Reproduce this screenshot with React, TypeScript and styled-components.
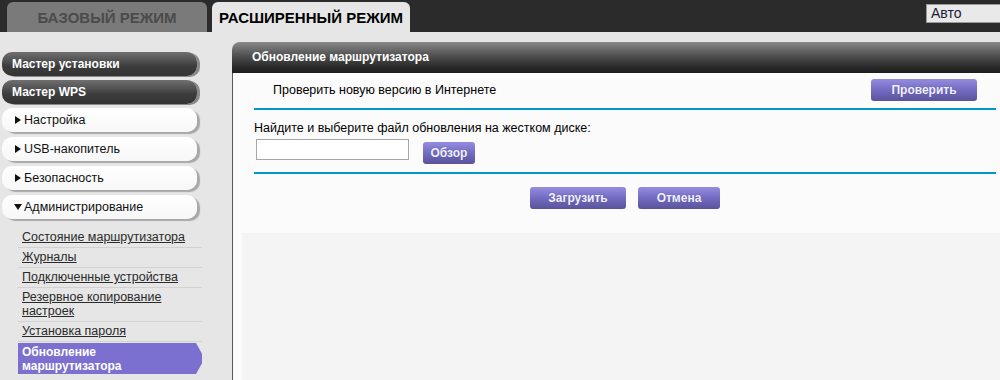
import React from "react";
import styled, { createGlobalStyle } from "styled-components";

const Global = createGlobalStyle`
  html, body { margin: 0; padding: 0; }
  body {
    font-family: "Liberation Sans", Arial, sans-serif;
    background: #e6e6e6;
    overflow: hidden;
  }
`;

const Page = styled.div`
  width: 1000px;
  height: 380px;
  display: flex;
  flex-direction: column;
  overflow: hidden;
`;

const TopBar = styled.div`
  height: 32px;
  background: #2b2b2b;
  display: flex;
  align-items: flex-end;
  padding-left: 7px;
  gap: 5px;
  flex: none;
`;

const Tab = styled.div<{ $active?: boolean }>`
  width: ${(p) => (p.$active ? 198 : 200)}px;
  height: 30px;
  border-radius: 6px 6px 0 0;
  background: ${(p) => (p.$active ? "#e6e6e6" : "#7a7a7a")};
  color: ${(p) => (p.$active ? "#000" : "#4b4b4b")};
  font-weight: bold;
  font-size: 15px;
  display: flex;
  align-items: center;
  justify-content: center;
  padding-top: 1px;
  box-sizing: border-box;
`;

const ModeSelect = styled.div`
  margin-left: auto;
  align-self: flex-start;
  margin-top: 4px;
  width: 74px;
  height: 19px;
  box-sizing: border-box;
  border: 1px solid #9a9a9a;
  border-right: none;
  background: #e9e9e9;
  color: #1a1a3a;
  font-size: 14px;
  line-height: 17px;
  padding-left: 4px;
`;

const Content = styled.div`
  flex: 1;
  display: flex;
  min-height: 0;
`;

const Sidebar = styled.div`
  width: 232px;
  flex: none;
  box-sizing: border-box;
  padding: 20px 0 0 2px;
  display: flex;
  flex-direction: column;
`;

const DarkItem = styled.div`
  width: 195px;
  height: 24px;
  margin-bottom: 4px;
  border-radius: 10px;
  background: linear-gradient(#707070, #3c3c3c 60%, #333);
  box-shadow: 3px 1px 0 #8a8a8a;
  color: #fff;
  font-weight: bold;
  font-size: 12px;
  line-height: 24px;
  padding-left: 10px;
  box-sizing: border-box;
`;

const MenuItem = styled.div<{ $open?: boolean }>`
  width: 195px;
  height: 24px;
  margin-bottom: 5px;
  border-radius: 10px;
  background: linear-gradient(#ffffff, #f7f7f7);
  box-shadow: 3px 2px 1px #a8a8a8;
  color: #111;
  font-size: 12.5px;
  line-height: 24px;
  padding-left: 12px;
  box-sizing: border-box;
  display: flex;
  align-items: center;
  gap: 2px;
  &::before {
    content: "";
    width: 0;
    height: 0;
    ${(p) =>
      p.$open
        ? `border-top: 6px solid #111; border-left: 4px solid transparent; border-right: 4px solid transparent; margin-right: 0;`
        : `border-left: 6px solid #111; border-top: 4px solid transparent; border-bottom: 4px solid transparent; margin: 0 1px 0 1px;`}
  }
`;

const SubList = styled.div`
  margin: 4px 0 0 16px;
  width: 184px;
  display: flex;
  flex-direction: column;
`;

const SubLink = styled.a`
  display: block;
  padding: 2px 4px 3px;
  line-height: 14px;
  font-size: 12.5px;
  color: #2a2a2a;
  text-decoration: underline;
  border-bottom: 1px solid #d2d2d2;
`;

const ActiveLink = styled.div`
  margin-top: 1px;
  padding: 2px 4px 1px;
  line-height: 14px;
  font-size: 12px;
  font-weight: bold;
  color: #fff;
  background: #7b6fcf;
  width: 184px;
  box-sizing: border-box;
  clip-path: polygon(0 0, calc(100% - 6px) 0, 100% 35%, 100% 65%, calc(100% - 6px) 100%, 0 100%);
`;

const Main = styled.div`
  flex: 1;
  display: flex;
  flex-direction: column;
  padding-top: 10px;
  min-width: 0;
`;

const PanelHeader = styled.div`
  height: 31px;
  flex: none;
  border-radius: 8px 0 0 0;
  background: linear-gradient(#8a8a8a, #555 40%, #2a2a2a 80%, #1c1c1c);
  color: #fff;
  font-weight: bold;
  font-size: 12px;
  line-height: 31px;
  padding-left: 20px;
`;

const PanelBody = styled.div`
  flex: 1;
  border-left: 1px solid #5a5a5a;
  background: #fbfbfb;
  display: flex;
  flex-direction: column;
`;

const Form = styled.div`
  padding: 0 4px 0 21px;
  display: flex;
  flex-direction: column;
`;

const CheckRow = styled.div`
  display: flex;
  align-items: center;
  justify-content: space-between;
  padding: 6px 19px 7px;
  font-size: 12.5px;
  color: #000;
`;

const BlueRule = styled.div`
  height: 2px;
  background: #0099cc;
`;

const Label = styled.div`
  margin-top: 10px;
  font-size: 12.5px;
  line-height: 16px;
  color: #000;
`;

const FileRow = styled.div`
  display: flex;
  align-items: flex-start;
  gap: 14px;
  margin: 3px 0 8px 2px;
`;

const FileInput = styled.div`
  width: 153px;
  height: 21px;
  box-sizing: border-box;
  border: 1px solid #a6a6a6;
  background: #fff;
`;

const Button = styled.button<{ $w: number }>`
  width: ${(p) => p.$w}px;
  height: 22px;
  border: none;
  border-radius: 3px;
  background: linear-gradient(#948ddf, #736bc2 50%, #5a5399);
  color: #f2f2ff;
  font-family: "Liberation Sans", Arial, sans-serif;
  font-weight: bold;
  font-size: 12px;
  padding: 0;
  text-shadow: 0 0 1px rgba(60, 50, 120, 0.6);
`;

const BrowseButton = styled(Button)`
  margin-top: 3px;
`;

const ActionRow = styled.div`
  display: flex;
  justify-content: center;
  gap: 12px;
  margin-top: 13px;
`;

const Lower = styled.div`
  flex: 1;
  margin: 24px 0 0 9px;
  background: #f4f4f4;
`;

export default function App() {
  return (
    <Page>
      <Global />
      <TopBar>
        <Tab>БАЗОВЫЙ РЕЖИМ</Tab>
        <Tab $active>РАСШИРЕННЫЙ РЕЖИМ</Tab>
        <ModeSelect>Авто</ModeSelect>
      </TopBar>
      <Content>
        <Sidebar>
          <DarkItem>Мастер установки</DarkItem>
          <DarkItem>Мастер WPS</DarkItem>
          <MenuItem>Настройка</MenuItem>
          <MenuItem>USB-накопитель</MenuItem>
          <MenuItem>Безопасность</MenuItem>
          <MenuItem $open>Администрирование</MenuItem>
          <SubList>
            <SubLink>Состояние маршрутизатора</SubLink>
            <SubLink>Журналы</SubLink>
            <SubLink>Подключенные устройства</SubLink>
            <SubLink>
              Резервное копирование
              <br />
              настроек
            </SubLink>
            <SubLink>Установка пароля</SubLink>
            <ActiveLink>
              Обновление
              <br />
              маршрутизатора
            </ActiveLink>
          </SubList>
        </Sidebar>
        <Main>
          <PanelHeader>Обновление маршрутизатора</PanelHeader>
          <PanelBody>
            <Form>
              <CheckRow>
                <span>Проверить новую версию в Интернете</span>
                <Button $w={106}>Проверить</Button>
              </CheckRow>
              <BlueRule />
              <Label>Найдите и выберите файл обновления на жестком диске:</Label>
              <FileRow>
                <FileInput />
                <BrowseButton $w={52}>Обзор</BrowseButton>
              </FileRow>
              <BlueRule />
              <ActionRow>
                <Button $w={96}>Загрузить</Button>
                <Button $w={82}>Отмена</Button>
              </ActionRow>
            </Form>
            <Lower />
          </PanelBody>
        </Main>
      </Content>
    </Page>
  );
}
